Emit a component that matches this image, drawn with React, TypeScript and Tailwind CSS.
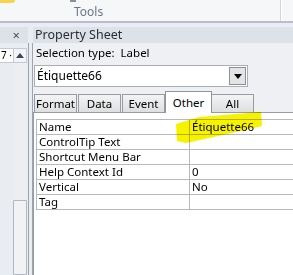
const rows: [string, string][] = [
  ['Name', 'Étiquette66'],
  ['ControlTip Text', ''],
  ['Shortcut Menu Bar', ''],
  ['Help Context Id', '0'],
  ['Vertical', 'No'],
  ['Tag', ''],
];

const tabs = ['Format', 'Data', 'Event', 'Other', 'All'];

export default function App() {
  return (
    <div className="relative w-[293px] h-[275px] overflow-hidden bg-[#e9ecf1] font-['Noto_Sans',sans-serif] text-[11.5px] text-black">
      {/* ribbon */}
      <div className="relative h-[23px] bg-[#f6f7f9] border-b-2 border-[#bdbbd3]">
        <div className="absolute left-0 top-0 w-[15px] h-[3px] bg-[#f7d44c] rounded-br-sm" />
        <div className="absolute left-[70px] top-0 w-[6px] h-[2px] bg-[#8a8f99]" />
        <div className="absolute left-[280px] top-0 w-px h-[21px] bg-[#d4d6dc]" />
        <div className="absolute left-[281px] top-0 w-px h-[21px] bg-white" />
        <div className="pt-[6px] pl-[74px] text-[12px] leading-[12px] text-[#6b7688]">Tools</div>
      </div>

      <div className="flex h-[252px] pt-[4px]">
        {/* left pane */}
        <div className="w-[28px] flex flex-col">
          <div className="h-[16px] bg-[#dde1e8] flex items-center justify-end pr-[8px] text-[13px] leading-none text-[#4a4f58]">
            ×
          </div>
          <div className="flex-1 flex pt-[5px]">
            <div className="w-[13px] flex flex-col">
              <div className="h-[15px] bg-white border-y border-[#c5c9d1] text-[10px] leading-[13px] pl-[1px]">7 ·</div>
            </div>
            <div className="w-[14px] flex flex-col">
              <div className="h-[15px] bg-[#f3f4f6] border border-[#c5c9d1] flex items-center justify-center">
                <div className="w-0 h-0 border-x-[4px] border-x-transparent border-b-[5px] border-b-[#3b4553]" />
              </div>
              <div className="h-[137px] bg-[#eceef2]" />
              <div className="flex-1 bg-[#f1f2f4] border border-[#b3b8c0] rounded-t-[1px]" />
            </div>
          </div>
        </div>

        {/* splitter */}
        <div className="w-[5px] flex justify-between">
          <div className="w-px bg-[#9ea4ad] mt-[16px]" />
          <div className="w-px bg-[#9ea4ad] mt-[16px]" />
        </div>

        {/* property sheet */}
        <div className="flex-1 flex flex-col bg-[#eef0f4]">
          <div className="h-[16px] bg-[#dde1e8] flex items-center pl-[2px] text-[12.5px] leading-none text-[#2a2d33]">
            Property Sheet
          </div>
          <div className="pl-[3px] pt-[3px] h-[19px] leading-[14px]">
            Selection type:&nbsp;&nbsp;Label
          </div>
          <div className="ml-[1px] mt-[3px] w-[214px] h-[22px] bg-white border border-[#a9aeb7] flex items-center">
            <div className="flex-1 pl-[2px] text-[12px]">Étiquette66</div>
            <div className="w-[17px] h-[18px] mr-[1px] bg-[#e3e4e6] border border-[#8c9098] flex items-center justify-center">
              <div className="w-0 h-0 border-x-[4px] border-x-transparent border-t-[5px] border-t-black" />
            </div>
          </div>
          <div className="flex items-end h-[24px] pl-[1px] mt-[1px]">
            {tabs.map((t) => {
              const active = t === 'Other';
              return (
                <div
                  key={t}
                  className={
                    active
                      ? 'h-[22px] w-[47px] -mx-[1px] z-10 bg-white border border-b-0 border-[#8f949c] flex items-center justify-center text-[11.5px] leading-[14px] mb-[-1px]'
                      : 'h-[18px] w-[43px] bg-gradient-to-b from-[#f4f4f4] to-[#dedfe1] border border-b-0 border-[#979ba3] flex items-center justify-center text-[11.5px] leading-[14px] mr-px'
                  }
                >
                  {t}
                </div>
              );
            })}
          </div>
          <div className="flex-1 bg-white border-l border-t border-[#979ba3] pt-[6px] pl-[2px]">
            <div className="border-t border-l border-[#b7b9bd]">
              {rows.map(([k, v]) => (
                <div key={k} className="flex h-[15px] border-b border-[#b7b9bd] leading-[13px] text-[11.5px]">
                  <div className="w-[153px] pl-[2px] border-r border-[#b7b9bd]">{k}</div>
                  <div className="flex-1 pl-[2px]">{v}</div>
                </div>
              ))}
            </div>
          </div>
        </div>
      </div>

      {/* highlighter mark */}
      <svg className="absolute left-0 top-0 mix-blend-multiply pointer-events-none" width="293" height="275">
        <path
          d="M176 124 L199 117 L261 112 L262 126 L232 133 L186 143 L177 141 Z"
          fill="#f7f200"
        />
      </svg>
    </div>
  );
}
